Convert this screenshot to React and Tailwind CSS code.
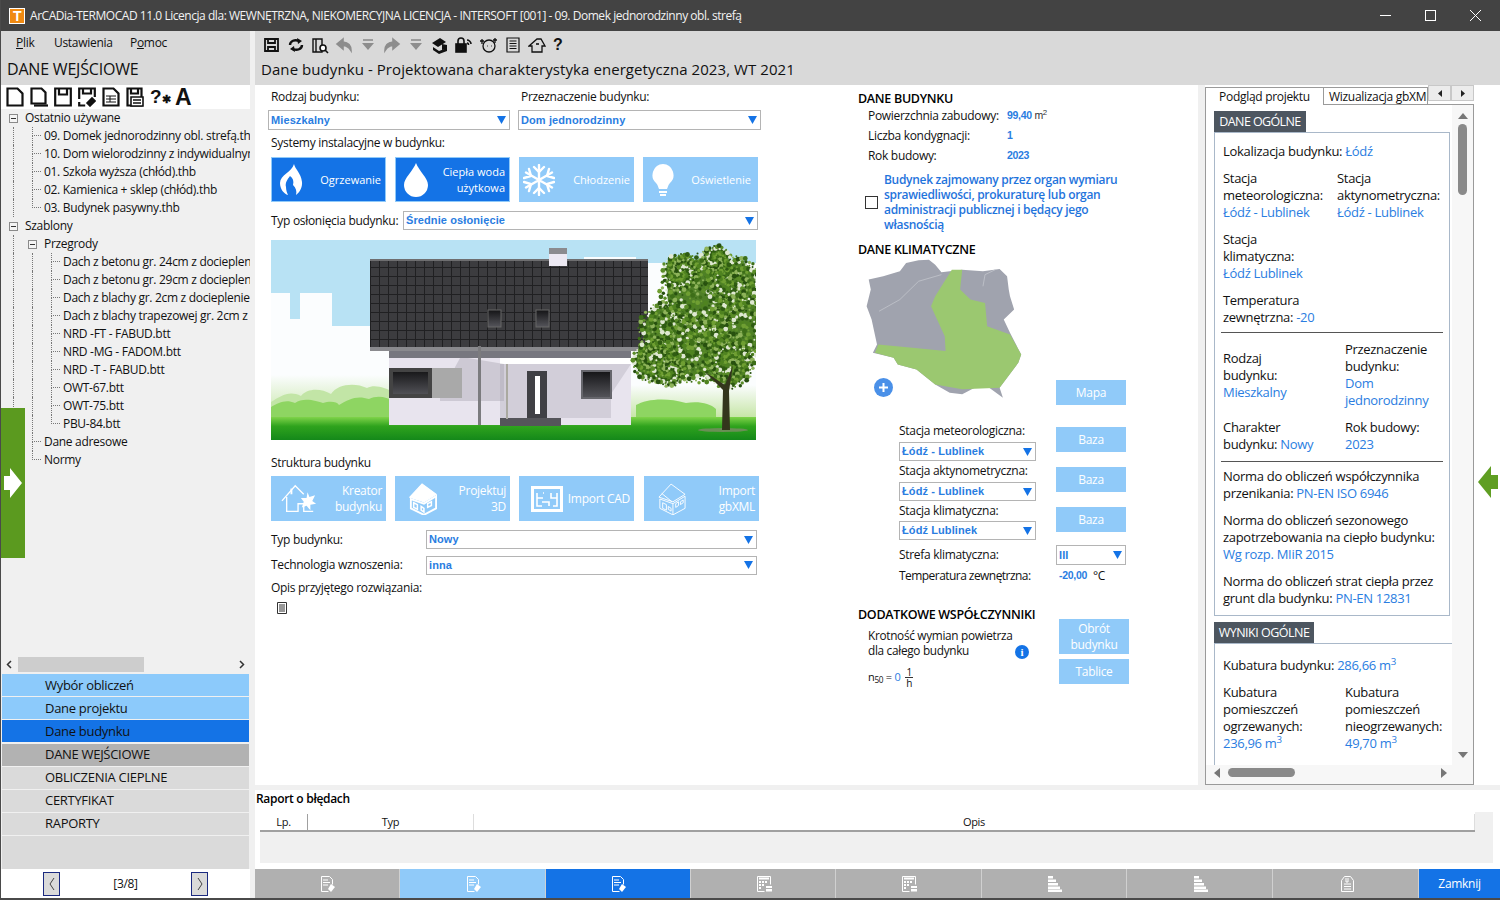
import React from "react";

const BLUE = "#1473e6";

const recentFiles = [
  "09. Domek jednorodzinny obl. strefą.thb",
  "10. Dom wielorodzinny z indywidualnymi",
  "01. Szkoła wyższa (chłód).thb",
  "02. Kamienica + sklep (chłód).thb",
  "03. Budynek pasywny.thb",
];

const partitions = [
  "Dach z betonu gr. 24cm z dociepleniem",
  "Dach z betonu gr. 29cm z dociepleniem",
  "Dach z blachy gr. 2cm z dociepleniem",
  "Dach z blachy trapezowej gr. 2cm z docieplenia",
  "NRD -FT - FABUD.btt",
  "NRD -MG - FADOM.btt",
  "NRD -T - FABUD.btt",
  "OWT-67.btt",
  "OWT-75.btt",
  "PBU-84.btt",
];

const treeRows = [
  { text: "Ostatnio używane", level: 0, box: true, guides: [] },
  ...recentFiles.map((text, i) => ({ text, level: 1, guides: [true], last: i === recentFiles.length - 1 })),
  { text: "Szablony", level: 0, box: true, guides: [] },
  { text: "Przegrody", level: 1, box: true, guides: [true] },
  ...partitions.map((text, i) => ({ text, level: 2, guides: [true, true], last: i === partitions.length - 1 })),
  { text: "Dane adresowe", level: 1, guides: [true] },
  { text: "Normy", level: 1, guides: [true], last: true },
];

// clumps of leaves for the tree in the building picture
const clumps = [
  [432, 55, 42], [398, 92, 30], [462, 42, 26], [468, 88, 32], [425, 108, 34],
  [382, 122, 20], [458, 124, 24], [410, 32, 18], [445, 20, 14], [398, 130, 16],
];
const leafColors = ["#2f5c12", "#4f8320", "#6f9f32", "#3d6e18", "#8eb35a", "#27500f", "#5a8c28", "#dfe8d2"];
const leaves = clumps.flatMap(([cx, cy, rad], c) =>
  Array.from({ length: Math.round(rad * 8) }, (_, i) => {
    const a = ((i + c * 7) * 137.5 * Math.PI) / 180;
    const r = Math.sqrt((i + 1) / (rad * 8)) * rad * 1.05;
    return { x: cx + Math.cos(a) * r, y: cy + Math.sin(a) * r, r: 1 + ((i + c) % 3) * 0.7, fill: leafColors[(i * 3 + c) % 8] };
  })
);

function TreeRow({ row }) {
  return (
    <div className="flex h-[18px] items-center whitespace-nowrap">
      {row.guides.map((on, i) => (
        <div key={i} className={`h-full w-[19px] shrink-0 ${on ? "border-l border-dotted border-[#777]" : ""}`} />
      ))}
      {row.box ? (
        <div className="flex w-[12px] shrink-0 items-center">
          <div className="-ml-[4px] flex h-[9px] w-[9px] items-center justify-center border border-[#8a8a8a] bg-[#f4f4f4]">
            <div className="h-px w-[5px] bg-[#333]" />
          </div>
        </div>
      ) : (
        <div className="flex h-full w-[12px] shrink-0 flex-col">
          <div className="h-[9px] w-[9px] border-b border-l border-dotted border-[#777]" />
          {!row.last && <div className="h-[9px] border-l border-dotted border-[#777]" />}
        </div>
      )}
      <span>{row.text}</span>
    </div>
  );
}

function Select({ value, className = "" }) {
  return (
    <div className={`flex items-center justify-between border border-[#b4b4b4] bg-white pl-[2px] pr-[3px] ${className}`}>
      <span className="font-['Liberation_Sans',sans-serif] text-[11px] font-bold tracking-[0.1px] text-[#2a7de1]">{value}</span>
      <svg width="9" height="8" viewBox="0 0 9 8"><path d="M0 0h9L4.500 8z" fill={BLUE} /></svg>
    </div>
  );
}

function FlameIcon() {
  return (
    <svg width="24" height="32" viewBox="0 0 24 32" fill="white">
      <path d="M14 0c1 5 7 9 8 18 .5 5-2 10-6 13 1-4 0-7-3-10 1-4 0-7-3-9-3 4-5 7-4 11 0 3 1 6 2 8-4-1-8-6-8-12C0 11 12 8 14 0z" />
    </svg>
  );
}

function DropIcon() {
  return (
    <svg width="24" height="34" viewBox="0 0 24 34" fill="white">
      <path d="M12 0c3 8 12 15 12 22a12 12 0 0 1-24 0C0 15 9 8 12 0z" />
    </svg>
  );
}

function SnowIcon() {
  return (
    <svg width="32" height="32" viewBox="0 0 32 32" fill="none" stroke="white" strokeWidth="2.400" strokeLinecap="round">
      <path d="M16 1v30M3 8.500l26 15M29 8.500l-26 15" />
      <path d="M11 3l5 5 5-5M11 29l5-5 5 5M1 14l7-2-2-7M31 14l-7-2 2-7M1 18l7 2-2 7M31 18l-7 2 2 7" />
    </svg>
  );
}

function BulbIcon() {
  return (
    <svg width="24" height="34" viewBox="0 0 24 34" fill="white">
      <path d="M12 1a11 11 0 0 0-7 19c2 2 2 4 3 6h8c1-2 1-4 3-6a11 11 0 0 0-7-19z" />
      <path d="M8 28h8v2H8zM9 31h6v2H9z" />
    </svg>
  );
}

function KreatorIcon() {
  return (
    <svg width="36" height="30" viewBox="0 0 38 30" fill="none" stroke="white" strokeWidth="1.400">
      <path d="M1 17L15 1l9 9M6 13v15h12v-8h6v8h10" />
      <path d="M11 4v6" strokeWidth="2" />
      <path d="M28 8l2 5 6-2-3 6 4 3-6 1 0 6-4-5-5 2 2-6-3-4 6 0z" fill="white" stroke="none" />
    </svg>
  );
}

function ProjectIcon() {
  return (
    <svg width="28" height="32" viewBox="0 0 30 34" fill="none" stroke="white" strokeWidth="1.400">
      <path d="M1 15L14 1l15 11-13 8z" fill="white" />
      <path d="M2 17v10l14 7 13-7V14l-13 8z" strokeWidth="2" />
      <path d="M5 21l4 2v5l-4-2zM13 25l3 2v4l-3-2zM20 26l4-2v-4l-4 2z" strokeWidth="1.600" />
    </svg>
  );
}

function CadIcon() {
  return (
    <svg width="32" height="26" viewBox="0 0 32 26" fill="none" stroke="white">
      <rect x="1.500" y="1.500" width="29" height="23" strokeWidth="3" />
      <path d="M6 7v5h6M12 7h1M6 12v8h5M11 16h7v4M20 7v5h6M26 7v13h-4" strokeWidth="1.600" />
    </svg>
  );
}

function XmlIcon() {
  return (
    <svg width="28" height="32" viewBox="0 0 30 34" fill="none" stroke="white" strokeWidth="1">
      <path d="M1 15L14 1l15 11-13 8zM4 11l11 9M2 17v10l14 7 13-7V14l-13 8zM16 22v12" />
      <path d="M5 21l4 2v6l-4-2zM19 26l3-2v-4l-3 2zM24 23l3-2v-3l-3 2zM11 25l3 2v3l-3-2z" />
    </svg>
  );
}

function DocPenIcon() {
  return (
    <svg width="15" height="16" viewBox="0 0 15 16" fill="none" stroke="white">
      <path d="M.5.500h8l3 3v5M.5.500v15h7" />
      <path d="M2 4h5M2 6.500h7M2 9h5" strokeWidth="1.200" />
      <path d="M10 8l4 3-4 5-3-3z" fill="white" stroke="none" />
    </svg>
  );
}

function CalcIcon() {
  return (
    <svg width="16" height="16" viewBox="0 0 16 16" fill="none" stroke="white">
      <path d="M.5.500h13v8M.5.500v15h7" />
      <path d="M2 2.500h10" strokeWidth="2" />
      <path d="M2 6h2M5 6h2M8 6h2M2 9h2M5 9h2M2 12h2" strokeWidth="2" />
      <path d="M9 10h6v2H9zM9 13h6v2.500H9z" fill="white" stroke="none" />
    </svg>
  );
}

function BarsIcon() {
  return (
    <svg width="15" height="16" viewBox="0 0 15 16" fill="white">
      <path d="M0 0h5v2.500H0zM0 3.500h8V6H0zM0 7h10v2.500H0zM0 10.500h12V13H0zM0 13.500h14V16H0z" />
    </svg>
  );
}

function ClipDocIcon() {
  return (
    <svg width="13" height="16" viewBox="0 0 13 16" fill="none" stroke="white">
      <path d="M.5 4.500l3-4h6l3 4v11H.5z" />
      <path d="M3 8h7M3 10.500h7M3 13h7M5 2v4h2V2" />
    </svg>
  );
}

function ToolIcon({ children, w = 18, h = 18, vb = "0 0 18 18", stroke = "#111" }) {
  return (
    <svg width={w} height={h} viewBox={vb} fill="none" stroke={stroke} strokeWidth="1.600" className="shrink-0">
      {children}
    </svg>
  );
}

const ActionButton = ({ icon, children, active, iconClass = "pl-[1px]", className = "" }) => (
  <div
    className={`flex h-[45px] w-[115px] items-center justify-between whitespace-nowrap pr-[4px] text-right leading-[16px] text-white ${
      active ? "border border-[#90caf9] bg-[#1473e6]" : "bg-[#90caf9]"
    } ${iconClass} ${className}`}
  >
    <div className="flex w-[38px] shrink-0 justify-center">{icon}</div>
    <div>{children}</div>
  </div>
);

const SmallButton = ({ children, className = "" }) => (
  <div className={`flex items-center justify-center bg-[#90caf9] text-center leading-[16px] text-white ${className}`}>
    {children}
  </div>
);

const Value = ({ children }) => <span className="text-[#2a7de1]">{children}</span>;

function HouseDrawing() {
  return (
    <svg width="485" height="200" viewBox="0 0 485 200" className="block">
      <defs>
        <linearGradient id="grass" x1="0" y1="0" x2="0" y2="1">
          <stop offset="0" stopColor="#7fd34a" />
          <stop offset="0.4" stopColor="#2fa31d" />
          <stop offset="1" stopColor="#14881a" />
        </linearGradient>
        <linearGradient id="fade" x1="0" y1="0" x2="0" y2="1">
          <stop offset="0" stopColor="#fbfdfe" />
          <stop offset="1" stopColor="#c7e6a8" />
        </linearGradient>
        <linearGradient id="glass" x1="0" y1="0" x2="0" y2="1">
          <stop offset="0" stopColor="#141416" />
          <stop offset="1" stopColor="#55555b" />
        </linearGradient>
        <pattern id="tiles" width="9" height="9" patternUnits="userSpaceOnUse">
          <rect width="9" height="9" fill="#3c3c3f" />
          <path d="M0 .5h9M.5 0v9" stroke="#202022" strokeWidth="1" />
        </pattern>
      </defs>
      <rect width="485" height="200" fill="#b8e2f4" />
      <path d="M0 53h19v26h10V53h32v33h61v90H0z" fill="#fbfdfe" />
      <path d="M313 17h52v6h120v154H313z" fill="#fbfdfe" />
      <rect y="135" width="122" height="42" fill="url(#fade)" />
      <rect x="360" y="145" width="125" height="32" fill="url(#fade)" />
      <path d="M0 177v-15c10-6 18-12 30-6 6-8 20-8 30-2 6-10 24-12 36-6 8-4 18 0 26 4v25z" fill="#c2e5a6" />
      <path d="M0 177v-10c8-4 14-8 24-4 8-6 22-2 28 0 6-2 14-2 16 2v12z" fill="#8ed562" />
      <path d="M68 177v-12c10-6 18-10 30-6 8-4 18-2 24 2v16z" fill="#8ed562" />
      <path d="M365 177v-12c10-6 30-8 50-2 12-2 24 0 30 6v8z" fill="#8ed562" />
      <rect y="177" width="485" height="23" fill="url(#grass)" />
      <rect x="118" y="110" width="242" height="75" fill="#e8e4ee" />
      <rect x="118" y="111" width="242" height="7" fill="#77777f" />
      <rect x="229" y="118" width="131" height="6" fill="#ffffff" />
      <path d="M197 118h-8l-20 37v6h64v-37z" fill="#9a97a4" opacity="0.35" />
      <path d="M229 124h131l-20 30v24H229z" fill="#9a97a4" opacity="0.28" />
      <rect x="118" y="128" width="73" height="30" fill="#a9a9a9" />
      <rect x="120" y="130" width="39" height="26" fill="url(#glass)" stroke="#444" strokeWidth="4" />
      <rect x="311" y="131" width="29" height="27" fill="url(#glass)" stroke="#66666c" strokeWidth="2" />
      <rect x="256" y="131" width="20" height="47" fill="#404045" />
      <rect x="264" y="136" width="5" height="38" fill="#ffffff" />
      <rect x="229" y="178" width="61" height="8" fill="#55555a" />
      <rect x="235" y="124" width="2" height="55" fill="#aaa9a0" />
      <rect x="99" y="19" width="278" height="91" fill="url(#tiles)" />
      <rect x="99" y="19" width="278" height="2" fill="#6e6e70" />
      <rect x="99" y="107" width="278" height="4" fill="#8a8a8e" />
      <rect x="278" y="14" width="18" height="12" fill="#ece8f2" />
      <rect x="278" y="8" width="18" height="6" fill="#8b8b8f" />
      <rect x="217" y="70" width="13" height="17" fill="url(#glass)" stroke="#666" />
      <rect x="265" y="70" width="13" height="17" fill="url(#glass)" stroke="#666" />
      <rect x="207" y="106" width="3" height="79" fill="#7b7b7e" />
      <ellipse cx="452" cy="190" rx="25" ry="2" fill="#6a8f56" />
      {clumps.map(([cx, cy, rad], i) => (
        <circle key={i} cx={cx} cy={cy} r={rad * 0.85} fill="#4f7f28" />
      ))}
      {leaves.map((l, i) => (
        <circle key={i} cx={l.x} cy={l.y} r={l.r} fill={l.fill} />
      ))}
      <path d="M451 190l1-40-18-18 20 13 8-20-4 26 1 39z" fill="#33361c" />
    </svg>
  );
}

function PolandMap() {
  return (
    <svg width="187" height="153" viewBox="0 520 450 460" preserveAspectRatio="none" className="-ml-[8px] block">
      <path
        d="M45 600L80 590L120 575L135 550L165 542L190 540L205 555L220 578L270 570L320 575L360 568L378 590L382 630L385 650L395 690L370 720L385 760L412 825L405 850L360 925L368 955L335 925L300 925L270 945L240 940L205 915L160 870L115 855L105 835L55 820L65 795L52 720L40 680L50 630z"
        fill="#a0a3ae"
      />
      <path d="M70 695L120 660L165 605L220 585" fill="none" stroke="#c4c6cd" strokeWidth="2" />
      <path d="M320 620L325 585L350 570" fill="none" stroke="#c4c6cd" strokeWidth="2" />
      <path
        d="M245 570L270 570L265 630L290 660L325 670L330 740L385 765L412 825L405 850L360 925L270 930L205 915L160 870L115 855L105 835L60 820L68 795L150 805L230 815L228 770L195 680L205 650z"
        fill="#9bc870"
      />
    </svg>
  );
}

const StationRow = ({ label, value, selectClass = "mt-[4px]" }) => (
  <div className="flex h-[40px]">
    <div className="ml-[41px] w-[137px]">
      <div className="h-[14px] leading-[14px]">{label}</div>
      <Select value={value} className={`h-[19px] ${selectClass}`} />
    </div>
    <SmallButton className="ml-[20px] mt-[3px] h-[25px] w-[70px]">Baza</SmallButton>
  </div>
);

const InfoRow = ({ label, children }) => (
  <div className="ml-[10px] flex h-[20px] items-center">
    <div className="w-[139px]">{label}</div>
    <div className="font-['Liberation_Sans',sans-serif] text-[10.500px] font-bold text-[#2a7de1]">{children}</div>
  </div>
);

const NavItem = ({ children, className }) => (
  <div className={`flex h-[22px] items-center pl-[43px] text-[13px] ${className}`}>{children}</div>
);

function LeftToolbar() {
  return (
    <div className="flex h-[24px] items-center gap-[6px] whitespace-nowrap bg-white pl-[5px]">
      <ToolIcon h={20} vb="0 0 18 20"><path d="M1.500 1.500h10l5 5v12h-15z" strokeWidth="2.200" /></ToolIcon>
      <ToolIcon h={20} vb="0 0 18 20"><path d="M1.500 1.500h10l4 4v11h-14z" strokeWidth="2.200" /><path d="M4 18.500h14" strokeWidth="2.200" /></ToolIcon>
      <ToolIcon h={20} vb="0 0 18 20"><path d="M1.200 1.500h15.600v17H1.200zM5 1.500v6h8v-6" strokeWidth="2.200" /></ToolIcon>
      <ToolIcon h={20} vb="0 0 18 20"><path d="M1.200 12V1.500h15.600V10M1.200 15v3.500h6M5 1.500v5h8v-5" strokeWidth="2.200" /><path d="M9 16l5-5 3 3-5 5z" fill="#111" /></ToolIcon>
      <ToolIcon h={20} vb="0 0 18 20"><path d="M1.500 1.500h10l5 5v12h-15z" strokeWidth="2.200" /><path d="M4 9h10M4 12h10M4 15h10M8 9v6" strokeWidth="1" /></ToolIcon>
      <ToolIcon h={20} vb="0 0 18 20"><path d="M1.500 1.500h14v17h-14zM5 1.500v5h7v-5" strokeWidth="2.200" /><path d="M5 10h12v9H5z" fill="white" stroke="#111" /><path d="M7 13h8M7 16h8" strokeWidth="1.400" /></ToolIcon>
      <span className="flex w-[18px] items-end font-['Liberation_Sans',sans-serif] text-[19px] font-bold leading-[20px] tracking-normal text-[#111]">?<span className="text-[11px] leading-[16px]">✱</span></span>
      <span className="ml-[1px] font-['Liberation_Sans',sans-serif] text-[23px] font-bold leading-[20px] text-[#111]">A</span>
    </div>
  );
}

function MainToolbar() {
  return (
    <div className="flex h-[27px] items-center gap-[6px] pl-[8px]">
      <ToolIcon><path d="M2 3h13v12H2zM5 3v4h7V3M5 15v-4h7v4" strokeWidth="1.800" /></ToolIcon>
      <ToolIcon><path d="M3 9c0-4 5-6 9-4M15 9c0 4-5 6-9 4" strokeWidth="2.400" /><path d="M10 2l5 3-4 3zM8 16l-5-3 4-3z" fill="#111" stroke="none" /></ToolIcon>
      <ToolIcon><path d="M2 3h9v13H2zM5 3v13" strokeWidth="1.400" /><circle cx="12" cy="12" r="3" fill="white" /><path d="M14 14l3 3" /></ToolIcon>
      <ToolIcon stroke="#8d8d8d"><path d="M8 3L2 8l6 5V9.500c4 0 6 2 8 5 0-6-3-8-8-8.500z" fill="#8d8d8d" /></ToolIcon>
      <ToolIcon stroke="#8d8d8d"><path d="M4 4h10" /><path d="M3 7h12l-6 7z" fill="#8d8d8d" stroke="none" /></ToolIcon>
      <ToolIcon stroke="#8d8d8d"><path d="M10 3l6 5-6 5V9.500c-4 0-6 2-8 5 0-6 3-8 8-8.500z" fill="#8d8d8d" /></ToolIcon>
      <ToolIcon stroke="#8d8d8d"><path d="M4 4h10" /><path d="M3 7h12l-6 7z" fill="#8d8d8d" stroke="none" /></ToolIcon>
      <ToolIcon><path d="M1 7l8-5 6 4-8 5zM2 11l6 4 8-3v3l-8 3-6-4z" fill="#111" stroke="none" /><path d="M11 8l5 1v4l-5 1z" fill="#111" stroke="none" /></ToolIcon>
      <ToolIcon><rect x="1" y="8" width="10" height="8" fill="#111" /><path d="M3 8V5a3 3 0 0 1 6 0v3M12 4c2 0 4 2 4 4M12 7c1 0 1.500 1 1.500 2" /></ToolIcon>
      <ToolIcon w={19} vb="0 0 19 18"><circle cx="10" cy="10" r="6" strokeWidth="1.300" /><path d="M3 3v5M1 5h4M16 2v5M14 4h4M8 10h.5M12 10h.5" strokeWidth="1.300" /></ToolIcon>
      <ToolIcon><path d="M3 2h12v14H3zM5.500 5h7M5.500 7.500h7M5.500 10h7M5.500 12.500h7" strokeWidth="1.200" /></ToolIcon>
      <ToolIcon><path d="M1 10l8-7h4l4 7h-3v6H4v-6z" strokeWidth="1.300" /><path d="M8 8h3" /></ToolIcon>
      <span className="ml-[1px] font-['Liberation_Sans',sans-serif] text-[16px] font-bold leading-[18px] text-[#111]">?</span>
    </div>
  );
}

function ProjectPreview() {
  return (
    <div className="flex min-h-0 flex-1 flex-col">
      <div className="flex min-h-0 flex-1">
        <div className="w-[246px] shrink-0 overflow-hidden pl-[8px] pt-[6px] text-[13px] leading-[17px]">
          <div className="flex h-[21px] w-[92px] items-center justify-center whitespace-nowrap bg-[#4d5660] text-[12.500px] tracking-[-0.6px] text-white">DANE OGÓLNE</div>
          <div className="h-[484px] w-[236px] border border-[#a9b8c9] px-[8px]">
            <div className="mt-[10px]">Lokalizacja budynku: <Value>Łódź</Value></div>
            <div className="mt-[10px] grid grid-cols-[114px_1fr]">
              <div>Stacja<br />meteorologiczna:<br /><Value>Łódź - Lublinek</Value></div>
              <div>Stacja<br />aktynometryczna:<br /><Value>Łódź - Lublinek</Value></div>
            </div>
            <div className="mt-[10px]">Stacja<br />klimatyczna:<br /><Value>Łódź Lublinek</Value></div>
            <div className="mt-[10px]">Temperatura<br />zewnętrzna: <Value>-20</Value></div>
            <div className="-mx-[2px] mt-[6px] border-t border-[#555]" />
            <div className="mt-[8px] grid grid-cols-[122px_1fr] items-center">
              <div>Rodzaj<br />budynku:<br /><Value>Mieszkalny</Value></div>
              <div>Przeznaczenie<br />budynku:<br /><Value>Dom<br />jednorodzinny</Value></div>
            </div>
            <div className="mt-[10px] grid grid-cols-[122px_1fr]">
              <div>Charakter<br />budynku: <Value>Nowy</Value></div>
              <div>Rok budowy:<br /><Value>2023</Value></div>
            </div>
            <div className="-mx-[2px] mt-[8px] border-t border-[#555]" />
            <div className="mt-[6px] whitespace-nowrap">Norma do obliczeń współczynnika<br />przenikania: <Value>PN-EN ISO 6946</Value></div>
            <div className="mt-[10px] whitespace-nowrap">Norma do obliczeń sezonowego<br />zapotrzebowania na ciepło budynku:<br /><Value>Wg rozp. MIiR 2015</Value></div>
            <div className="mt-[10px] whitespace-nowrap">Norma do obliczeń strat ciepła przez<br />grunt dla budynku: <Value>PN-EN 12831</Value></div>
          </div>
          <div className="mt-[6px] flex h-[21px] w-[100px] items-center justify-center whitespace-nowrap bg-[#4d5660] text-[12.500px] tracking-[-0.5px] text-white">WYNIKI OGÓLNE</div>
          <div className="h-[200px] w-[239px] border border-[#a9b8c9] px-[8px]">
            <div className="mt-[13px]">Kubatura budynku: <Value>286,66 m<sup>3</sup></Value></div>
            <div className="mt-[10px] grid grid-cols-[122px_1fr]">
              <div>Kubatura<br />pomieszczeń<br />ogrzewanych:<br /><Value>236,96 m<sup>3</sup></Value></div>
              <div>Kubatura<br />pomieszczeń<br />nieogrzewanych:<br /><Value>49,70 m<sup>3</sup></Value></div>
            </div>
          </div>
        </div>
        <div className="flex w-[21px] flex-col items-center bg-[#f7f7f7] pt-[8px]">
          <svg width="10" height="6" viewBox="0 0 10 6"><path d="M5 0l5 6H0z" fill="#777" /></svg>
          <div className="mt-[5px] h-[71px] w-[9px] rounded-full bg-[#8a8a8a]" />
          <svg width="10" height="6" viewBox="0 0 10 6" className="mb-[7px] mt-auto"><path d="M0 0h10L5 6z" fill="#777" /></svg>
        </div>
      </div>
      <div className="flex h-[19px] shrink-0 items-start bg-[#f7f7f7] pl-[8px] pt-[3px]">
        <svg width="6" height="10" viewBox="0 0 6 10"><path d="M6 0v10L0 5z" fill="#777" /></svg>
        <div className="ml-[8px] h-[9px] w-[67px] rounded-full bg-[#8a8a8a]" />
        <svg width="6" height="10" viewBox="0 0 6 10" className="ml-[146px]"><path d="M0 0v10l6-5z" fill="#777" /></svg>
      </div>
    </div>
  );
}

export default function App() {
  const bottomTabs = [
    { icon: <DocPenIcon />, bg: "bg-[#b0b0b0]", w: "w-[145px]" },
    { icon: <DocPenIcon />, bg: "bg-[#90caf9]", w: "w-[146px]" },
    { icon: <DocPenIcon />, bg: "bg-[#1473e6]", w: "w-[145px]" },
    { icon: <CalcIcon />, bg: "bg-[#b0b0b0]", w: "w-[145px]" },
    { icon: <CalcIcon />, bg: "bg-[#b0b0b0]", w: "w-[146px]" },
    { icon: <BarsIcon />, bg: "bg-[#b0b0b0]", w: "w-[145px]" },
    { icon: <BarsIcon />, bg: "bg-[#b0b0b0]", w: "w-[146px]" },
    { icon: <ClipDocIcon />, bg: "bg-[#b0b0b0]", w: "w-[146px]" },
  ];

  return (
    <div className="relative flex h-[900px] w-[1500px] flex-col overflow-hidden border-b-2 border-l border-[#4a4a4a] bg-white font-['Open_Sans',sans-serif] text-[12px] tracking-[-0.3px] text-[#111]">
      {/* title bar */}
      <div className="-ml-px flex h-[31px] w-[1500px] shrink-0 items-center bg-[#434343] pl-[9px] text-[12px] tracking-[-0.46px] text-[#f2f2f2]">
        <div className="flex h-[16px] w-[16px] items-center justify-center border border-white bg-[#f08a12]">
          <div className="font-['Liberation_Sans',sans-serif] text-[14px] font-bold leading-none text-white">T</div>
        </div>
        <span className="ml-[5px]">ArCADia-TERMOCAD 11.0 Licencja dla: WEWNĘTRZNA, NIEKOMERCYJNA LICENCJA - INTERSOFT [001] - 09. Domek jednorodzinny obl. strefą</span>
        <div className="ml-auto flex items-center">
          <svg width="11" height="11" viewBox="0 0 11 11" className="mr-[34px]"><path d="M0 5.500h11" stroke="white" /></svg>
          <svg width="11" height="11" viewBox="0 0 11 11" className="mr-[34px]"><rect x=".5" y=".5" width="10" height="10" fill="none" stroke="white" /></svg>
          <svg width="11" height="11" viewBox="0 0 11 11" className="mr-[19px]"><path d="M0 0l11 11M11 0L0 11" stroke="white" /></svg>
        </div>
      </div>

      <div className="flex min-h-0 flex-1">
        {/* left column */}
        <div className="flex w-[254px] shrink-0 flex-col bg-[#f0f0f0]">
          <div className="h-[54px] w-[249px] bg-[#d9d9d9]">
            <div className="flex h-[24px] items-center pl-[15px]">
              <span className="w-[38px]"><span className="underline">P</span>lik</span>
              <span className="w-[76px]">Ustawienia</span>
              <span>P<span className="underline">o</span>moc</span>
            </div>
            <div className="pl-[6px] pt-[3px] text-[16px] leading-[22px] tracking-[-0.2px]">DANE WEJŚCIOWE</div>
          </div>
          <div className="w-[249px]"><LeftToolbar /></div>
          <div className="h-[546px] w-[249px] overflow-hidden pl-[12px]">
            {treeRows.map((row, i) => <TreeRow key={i} row={row} />)}
          </div>
          <div className="mt-[2px] flex h-[15px] w-[249px] items-center bg-[#f0f0f0] px-[5px]">
            <svg width="6" height="9" viewBox="0 0 6 9"><path d="M5 1L1.500 4.500 5 8" fill="none" stroke="#333" strokeWidth="1.500" /></svg>
            <div className="ml-[6px] h-[15px] w-[126px] bg-[#cdcdcd]" />
            <svg width="6" height="9" viewBox="0 0 6 9" className="ml-auto"><path d="M1 1l3.500 3.500L1 8" fill="none" stroke="#333" strokeWidth="1.500" /></svg>
          </div>
          <div className="mt-[2px] flex w-[248px] flex-col gap-px pl-px">
            <NavItem className="bg-[#8ccafb] pt-[2px]">Wybór obliczeń</NavItem>
            <NavItem className="bg-[#8ccafb] pt-[2px]">Dane projektu</NavItem>
            <NavItem className="bg-[#1473e6] pt-[2px]">Dane budynku</NavItem>
            <NavItem className="mt-px bg-[#b2b2b2]">DANE WEJŚCIOWE</NavItem>
            <NavItem className="bg-[#dadada]">OBLICZENIA CIEPLNE</NavItem>
            <NavItem className="bg-[#dadada]">CERTYFIKAT</NavItem>
            <NavItem className="bg-[#dadada]">RAPORTY</NavItem>
            <div className="h-[33px] bg-[#dadada]" />
          </div>
          <div className="flex w-[249px] flex-1 items-center bg-white pl-[42px]">
            <div className="flex h-[24px] w-[17px] items-center justify-center border border-[#1b2a80] bg-[#dadada]">
              <svg width="6" height="14" viewBox="0 0 6 14"><path d="M5 1L1 7l4 6" fill="none" stroke="#444" /></svg>
            </div>
            <div className="w-[131px] text-center">[3/8]</div>
            <div className="flex h-[24px] w-[17px] items-center justify-center border border-[#1b2a80] bg-[#dadada]">
              <svg width="6" height="14" viewBox="0 0 6 14"><path d="M1 1l4 6-4 6" fill="none" stroke="#444" /></svg>
            </div>
          </div>
        </div>

        {/* main */}
        <div className="flex min-w-0 flex-1 flex-col">
          <div className="h-[54px] shrink-0 bg-[#d9d9d9]">
            <MainToolbar />
            <div className="pl-[6px] text-[15px] leading-[22px] tracking-[0.07px]">Dane budynku - Projektowana charakterystyka energetyczna 2023, WT 2021</div>
          </div>

          <div className="flex h-[700px] shrink-0">
            {/* form */}
            <div className="w-[595px] shrink-0 pl-[16px] pt-[5px]">
              <div className="-ml-[3px] grid w-[493px] grid-cols-[242px_243px] gap-x-[8px] leading-[14px]">
                <div className="pl-[3px]">Rodzaj budynku:</div>
                <div className="pl-[3px]">Przeznaczenie budynku:</div>
                <Select value="Mieszkalny" className="mt-[6px] h-[20px]" />
                <Select value="Dom jednorodzinny" className="mt-[6px] h-[20px]" />
              </div>
              <div className="mt-[6px] h-[14px] leading-[14px]">Systemy instalacyjne w budynku:</div>
              <div className="mt-[7px] flex gap-[9px] text-[11px] tracking-normal">
                <ActionButton active icon={<FlameIcon />}>Ogrzewanie</ActionButton>
                <ActionButton active icon={<DropIcon />}>Ciepła woda<br />użytkowa</ActionButton>
                <ActionButton icon={<SnowIcon />}>Chłodzenie</ActionButton>
                <ActionButton icon={<BulbIcon />}><span className="mr-[3px]">Oświetlenie</span></ActionButton>
              </div>
              <div className="mt-[9px] flex h-[19px] items-center">
                <div className="w-[132px]">Typ osłonięcia budynku:</div>
                <Select value="Średnie osłonięcie" className="h-[19px] w-[355px]" />
              </div>
              <div className="mt-[10px]"><HouseDrawing /></div>
              <div className="mt-[16px] h-[14px] leading-[14px]">Struktura budynku</div>
              <div className="mt-[6px] flex gap-[9px] text-[12px]">
                <ActionButton iconClass="pl-[9px]" icon={<KreatorIcon />}>Kreator<br />budynku</ActionButton>
                <ActionButton iconClass="pl-[9px]" icon={<ProjectIcon />}>Projektuj<br />3D</ActionButton>
                <ActionButton iconClass="pl-[9px]" icon={<CadIcon />}>Import CAD</ActionButton>
                <ActionButton iconClass="pl-[9px]" icon={<XmlIcon />} className="ml-px">Import<br />gbXML</ActionButton>
              </div>
              <div className="mt-[9px] flex h-[19px] items-center">
                <div className="w-[155px]">Typ budynku:</div>
                <Select value="Nowy" className="h-[19px] w-[331px]" />
              </div>
              <div className="mt-[7px] flex h-[18px] items-center">
                <div className="w-[155px]">Technologia wznoszenia:</div>
                <Select value="inna" className="h-[19px] w-[331px]" />
              </div>
              <div className="mt-[7px] h-[14px] leading-[14px]">Opis przyjętego rozwiązania:</div>
              <div className="ml-[6px] mt-[7px]">
                <svg width="10" height="12" viewBox="0 0 10 12" fill="none" stroke="#333"><path d="M.5.500h9v11h-9zM2 3h6M2 5h6M2 7h6M2 9h6" /></svg>
              </div>
            </div>

            {/* building and climate data */}
            <div className="w-[348px] shrink-0 pl-[8px] pt-[7px]">
              <div className="h-[14px] whitespace-nowrap text-[12.500px] font-semibold leading-[14px] text-black">DANE BUDYNKU</div>
              <InfoRow label="Powierzchnia zabudowy:">99,40 <span className="font-normal text-[#333]">m<sup>2</sup></span></InfoRow>
              <InfoRow label="Liczba kondygnacji:">1</InfoRow>
              <InfoRow label="Rok budowy:">2023</InfoRow>
              <div className="ml-[7px] mt-[6px] flex h-[60px] items-center">
                <div className="h-[13px] w-[13px] shrink-0 border border-[#333]" />
                <div className="ml-[6px] whitespace-nowrap font-semibold leading-[15px] text-[#1f74dc]">
                  Budynek zajmowany przez organ wymiaru<br />sprawiedliwości, prokuraturę lub organ<br />administracji publicznej i będący jego<br />własnością
                </div>
              </div>
              <div className="mt-[11px] h-[14px] whitespace-nowrap text-[12.500px] font-semibold leading-[14px] text-black">DANE KLIMATYCZNE</div>
              <div className="relative flex h-[148px] items-end">
                <div className="absolute left-0 top-[-4px]"><PolandMap /></div>
                <div className="absolute left-[16px] top-[121px] flex h-[19px] w-[19px] items-center justify-center rounded-full bg-[#4a90e8]">
                  <svg width="11" height="11" viewBox="0 0 11 11"><path d="M5.500 1v9M1 5.500h9" stroke="white" strokeWidth="2" /></svg>
                </div>
                <SmallButton className="ml-[198px] h-[25px] w-[70px]">Mapa</SmallButton>
              </div>
              <div className="mt-[19px]">
                <StationRow label="Stacja meteorologiczna:" value="Łódź - Lublinek" />
                <StationRow label="Stacja aktynometryczna:" value="Łódź - Lublinek" />
                <StationRow label="Stacja klimatyczna:" value="Łódź Lublinek" selectClass="mt-[3px]" />
              </div>
              <div className="ml-[41px] mt-px flex h-[20px] items-center">
                <div className="w-[157px]">Strefa klimatyczna:</div>
                <Select value="III" className="h-[20px] w-[70px]" />
              </div>
              <div className="ml-[41px] mt-[4px] flex h-[14px] items-center">
                <div className="w-[160px] whitespace-nowrap tracking-[-0.55px]">Temperatura zewnętrzna:</div>
                <span className="font-['Liberation_Sans',sans-serif] text-[10.500px] font-bold text-[#2a7de1]">-20,00</span>
                <span className="ml-[6px]">°C</span>
              </div>
              <div className="mt-[25px] flex">
                <div className="w-[201px]">
                  <div className="h-[14px] whitespace-nowrap text-[12.500px] font-semibold leading-[14px] text-black">DODATKOWE WSPÓŁCZYNNIKI</div>
                  <div className="ml-[10px] mt-[6px] flex items-end">
                    <div className="w-[147px] whitespace-nowrap text-[11.800px] leading-[15px]">Krotność wymian powietrza<br />dla całego budynku</div>
                    <div className="-mb-px flex h-[14px] w-[14px] items-center justify-center rounded-full bg-[#1473e6] font-['Liberation_Serif',serif] text-[11px] font-bold text-white">i</div>
                  </div>
                  <div className="ml-[10px] mt-[9px] flex items-center text-[11px]">
                    <span>n<sub>50</sub> = <span className="text-[#2a7de1]">0</span></span>
                    <div className="ml-[5px] flex flex-col items-center text-[10px] leading-[10px]">
                      <span className="border-b border-[#333] px-px">1</span>
                      <span>h</span>
                    </div>
                  </div>
                </div>
                <div className="flex flex-col gap-[5px] pt-[11px]">
                  <SmallButton className="h-[35px] w-[70px]">Obrót<br />budynku</SmallButton>
                  <SmallButton className="h-[25px] w-[70px]">Tablice</SmallButton>
                </div>
              </div>
            </div>

            <div className="w-[7px] shrink-0 bg-[#f0f0f0]" />

            {/* project preview */}
            <div className="flex h-[700px] w-[269px] shrink-0 flex-col">
              <div className="flex h-[19px] shrink-0 items-start">
                <div className="relative z-10 mt-[2px] flex h-[18px] w-[118px] items-center justify-center border-l border-t border-[#9a9a9a] bg-white pt-[1px]">Podgląd projektu</div>
                <div className="mt-[2px] flex h-[17px] w-[105px] items-center overflow-hidden whitespace-nowrap border-l border-r border-t border-[#9a9a9a] pl-[5px] pt-[1px]">Wizualizacja gbXML</div>
                <div className="flex h-[16px] w-[23px] items-center justify-center border border-[#c8c8c8] bg-[#ececec]">
                  <svg width="4" height="7" viewBox="0 0 4 7"><path d="M4 0v7L0 3.500z" fill="#222" /></svg>
                </div>
                <div className="flex h-[16px] w-[23px] items-center justify-center border border-[#c8c8c8] bg-[#ececec]">
                  <svg width="4" height="7" viewBox="0 0 4 7"><path d="M0 0v7l4-3.500z" fill="#222" /></svg>
                </div>
              </div>
              <div className="flex min-h-0 flex-1 border border-[#9a9a9a]">
                <ProjectPreview />
              </div>
            </div>
          </div>

          <div className="h-[5px] shrink-0 bg-[#f0f0f0]" />

          {/* error report */}
          <div className="flex-1 pl-px">
            <div className="pt-[2px] font-semibold leading-[14px] text-black">Raport o błędach</div>
            <div className="ml-[4px] mt-[6px] flex h-[20px] w-[1233px] text-[11px]">
              <div className="flex w-[1215px] border-b-2 border-[#a0a0a0] pt-[2px]">
                <div className="flex w-[48px] items-center justify-center border-r border-[#a0a0a0]">Lp.</div>
                <div className="flex w-[166px] items-center justify-center border-r border-[#ddd]">Typ</div>
                <div className="flex flex-1 items-center justify-center border-r border-[#ddd]">Opis</div>
              </div>
              <div className="flex-1 bg-[#f0f0f0]" />
            </div>
            <div className="ml-[4px] h-[31px] w-[1233px] bg-[#f0f0f0]" />
          </div>

          {/* bottom tabs */}
          <div className="flex h-[29px] shrink-0">
            {bottomTabs.map((tab, i) => (
              <div key={i} className={`flex items-center justify-center border-r border-[#d0d0d0] pl-[3px] ${tab.bg} ${tab.w}`}>
                {tab.icon}
              </div>
            ))}
            <div className="flex flex-1 items-center justify-center bg-[#1473e6] text-white">Zamknij</div>
          </div>
        </div>
      </div>

      {/* side arrows */}
      <div className="absolute left-0 top-[408px] flex h-[150px] w-[24px] items-center justify-center bg-[#5b9a1f]">
        <svg width="18" height="30" viewBox="0 0 18 30"><path d="M0 8h6V0l12 15L6 30v-8H0z" fill="white" /></svg>
      </div>
      <div className="absolute left-[1477px] top-[466px]">
        <svg width="20" height="32" viewBox="0 0 20 32"><path d="M20 9h-7V0L0 16l13 16v-9h7z" fill="#5f9e22" /></svg>
      </div>
    </div>
  );
}
